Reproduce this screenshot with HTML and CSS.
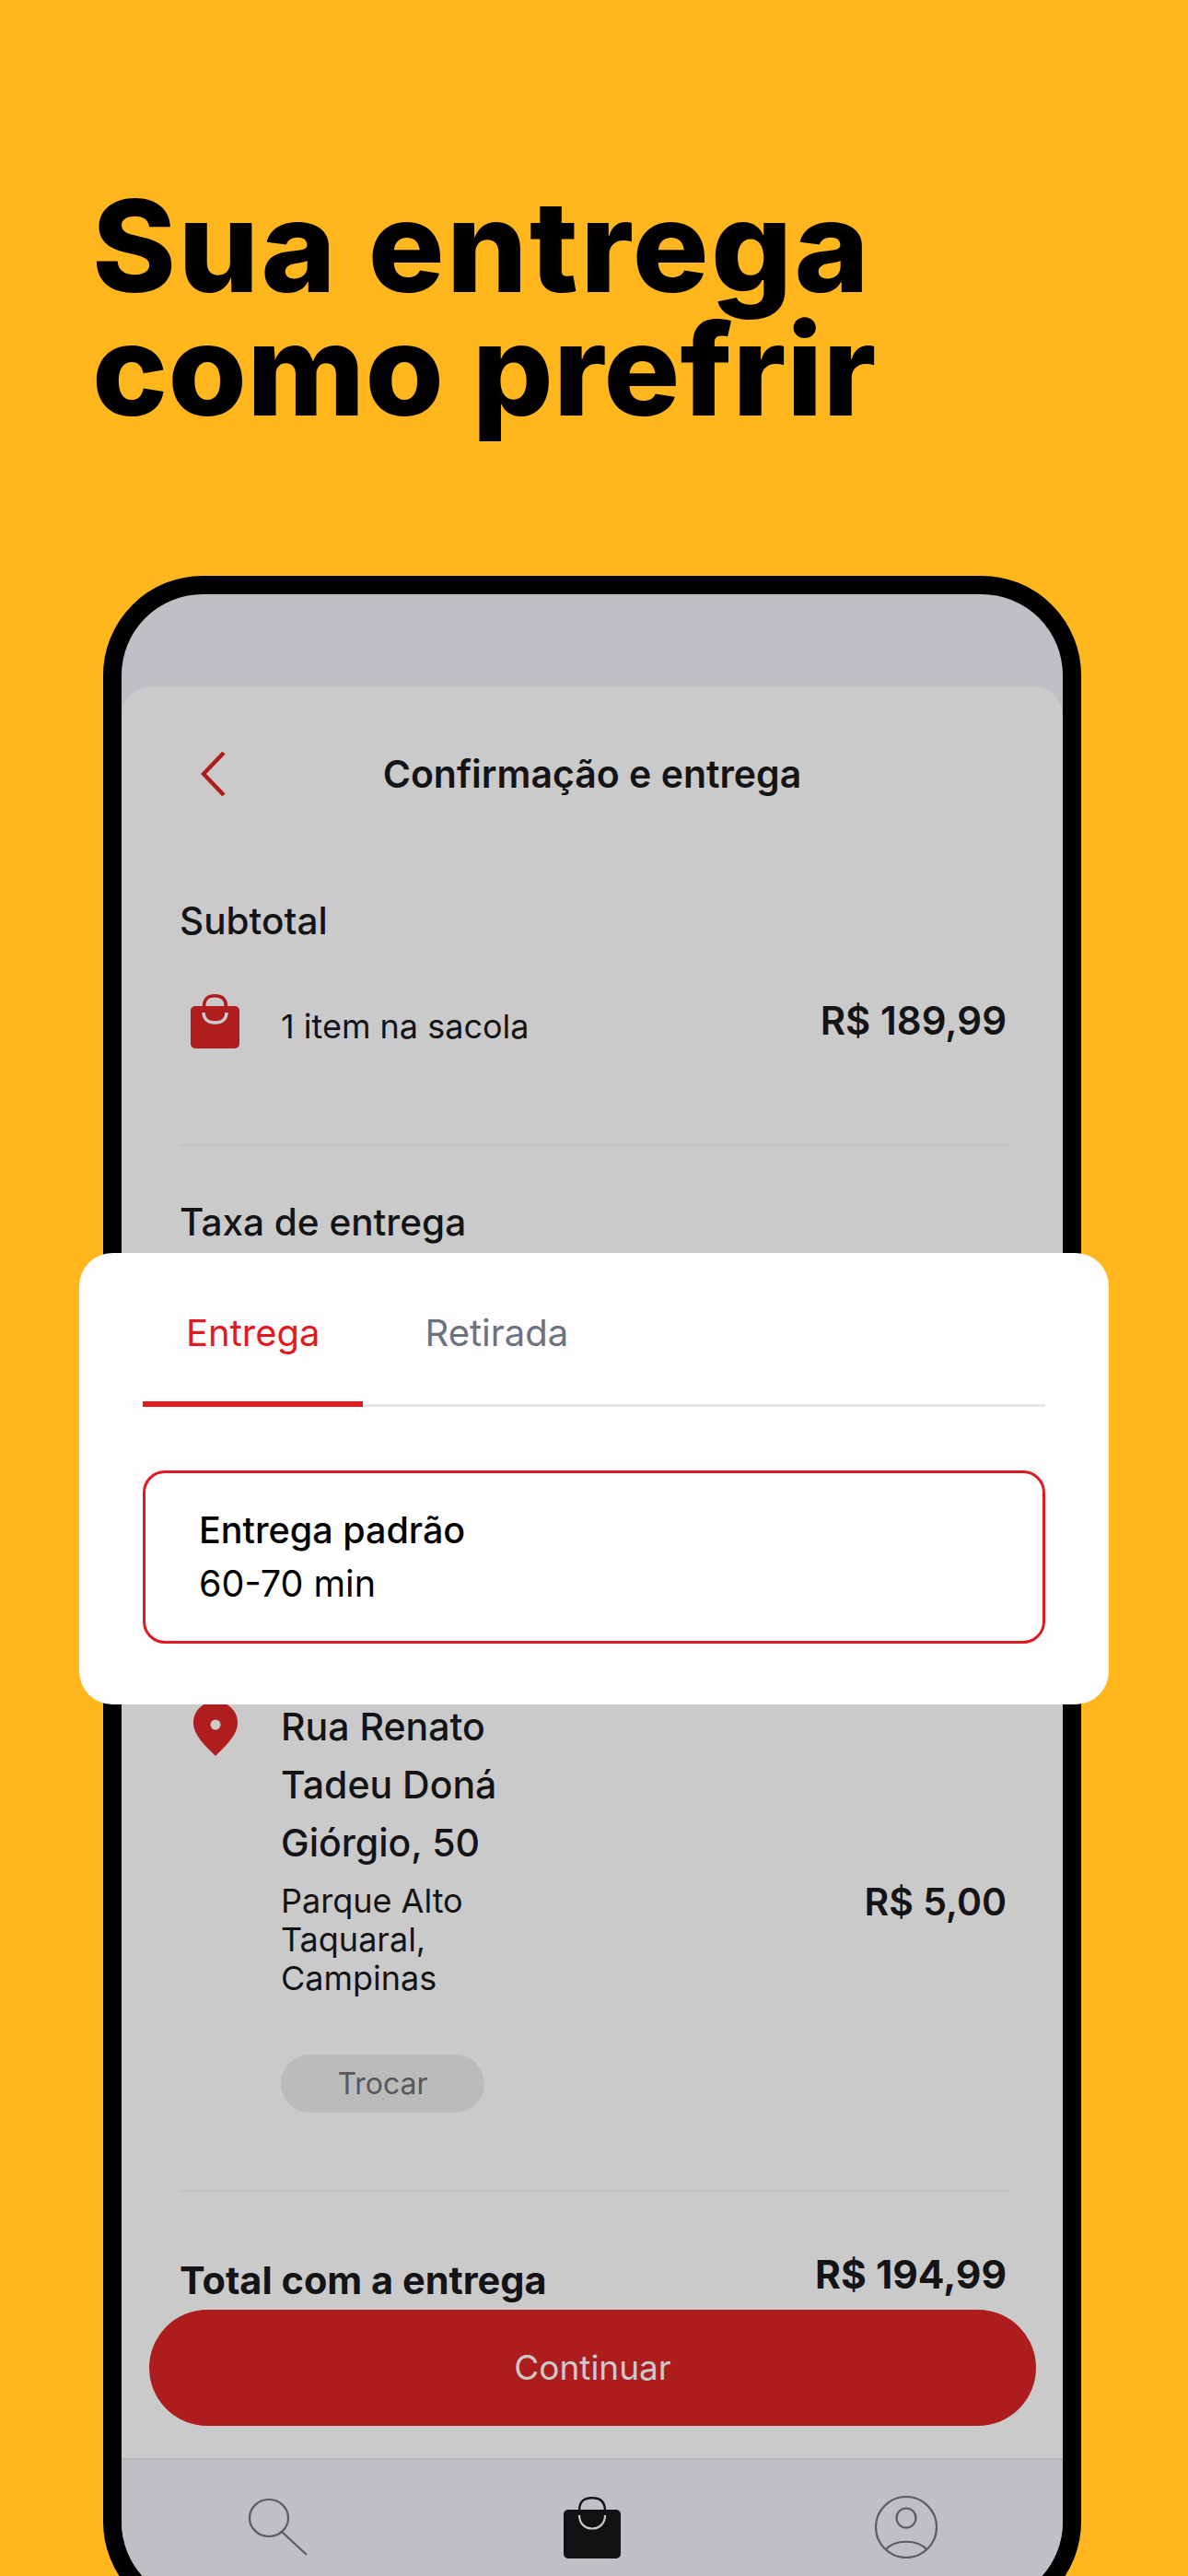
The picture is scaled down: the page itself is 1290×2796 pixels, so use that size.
FILE: index.html
```html
<!DOCTYPE html>
<html lang="pt-BR">

<head>
    <meta charset="UTF-8">
    <meta name="viewport" content="width=device-width, initial-scale=1.0">
    <title>Sua entrega como prefrir</title>
    <link rel="stylesheet" href="styles.css">
</head>

<body>
    <div class="page">
        <h1 class="headline">
            <span class="headline-top">Sua entrega</span>
            <span class="headline-bottom">como prefrir</span>
        </h1>

        <div class="phone">
            <div class="screen">
                <div class="sheet">
                    <div class="sheet-head">
                        <svg class="back-icon" width="28" height="50" viewBox="0 0 28 50">
                            <polyline points="26,2 4,25 26,48" fill="none" stroke="#b01d1f" stroke-width="4.4" />
                        </svg>
                        <div class="sheet-title">Confirmação e entrega</div>
                    </div>

                    <div class="section-title subtotal-title">Subtotal</div>
                    <div class="item-row">
                        <svg class="bag-icon" width="53" height="59" viewBox="0 0 53 59">
                            <path d="M14.5 14 C14.5 5 19 1.8 26.5 1.8 C34 1.8 38.5 5 38.5 14" fill="none" stroke="#b01d1f" stroke-width="3.6" />
                            <rect x="0" y="13" width="53" height="46" rx="5" fill="#b01d1f" />
                            <path d="M14 20 C14 27 19 31 26.5 31 C34 31 39 27 39 20" fill="none" stroke="#cbcacb" stroke-width="3.4" />
                        </svg>
                        <div class="item-label">1 item na sacola</div>
                        <div class="price item-price">R$ 189,99</div>
                    </div>

                    <div class="divider first-divider"></div>

                    <div class="section-title fee-title">Taxa de entrega</div>

                    <div class="address-row">
                        <svg class="pin-icon" width="48" height="59" viewBox="0 0 48 59">
                            <path d="M24 0 C38 0 48 10 48 23 C48 36 36 47 24 59 C12 47 0 36 0 23 C0 10 10 0 24 0 Z" fill="#b01d1f" />
                            <circle cx="24" cy="25" r="5.5" fill="#cbcacb" />
                        </svg>
                        <div class="address">
                            <div class="street">Rua Renato Tadeu Doná Giórgio, 50</div>
                            <div class="district">Parque Alto Taquaral, Campinas</div>
                            <div class="swap-button">Trocar</div>
                        </div>
                        <div class="price fee-price">R$ 5,00</div>
                    </div>

                    <div class="divider second-divider"></div>

                    <div class="total-row">
                        <div class="total-label">Total com a entrega</div>
                        <div class="price total-price">R$ 194,99</div>
                    </div>

                    <div class="continue-button">Continuar</div>
                </div>

                <div class="tabbar">
                    <div class="tabbar-item">
                        <svg class="search-icon" width="64" height="62" viewBox="0 0 64 62">
                            <ellipse cx="22" cy="21" rx="21" ry="20" fill="none" stroke="#5c5c62" stroke-width="2.2" />
                            <line x1="36" y1="36" x2="63" y2="61" stroke="#5c5c62" stroke-width="2.2" />
                        </svg>
                    </div>
                    <div class="tabbar-item">
                        <svg width="62" height="67" viewBox="0 0 62 67">
                            <path d="M17 15 C17 5 22 1.2 31 1.2 C40 1.2 45 5 45 15" fill="none" stroke="#121214" stroke-width="2.4" />
                            <rect x="0" y="14" width="62" height="53" rx="5" fill="#121214" />
                            <path d="M17 20 C17 29 23 34.5 31 34.5 C39 34.5 45 29 45 20" fill="none" stroke="#cbcacb" stroke-width="2.2" />
                        </svg>
                    </div>
                    <div class="tabbar-item">
                        <svg class="user-icon" width="68" height="68" viewBox="0 0 68 68">
                            <circle cx="34" cy="34" r="33" fill="none" stroke="#5c5c62" stroke-width="2.2" />
                            <circle cx="34" cy="24" r="10.5" fill="none" stroke="#5c5c62" stroke-width="2.2" />
                            <path d="M12 58 C22 47 46 47 56 58" fill="none" stroke="#5c5c62" stroke-width="2.2" />
                        </svg>
                    </div>
                </div>
            </div>
        </div>

        <div class="delivery-card">
            <div class="tabs">
                <div class="tab tab-active">Entrega</div>
                <div class="tab">Retirada</div>
            </div>
            <div class="option">
                <div class="option-name">Entrega padrão</div>
                <div class="option-time">60-70 min</div>
            </div>
        </div>
    </div>
</body>

</html>
```

FILE: styles.css
```css
* {
    box-sizing: border-box;
}

body {
    margin: 0;
    font-family: Inter, "Liberation Sans", sans-serif;
    color: #141416;
}

.page {
    position: relative;
    height: 2796px;
    overflow: hidden;
    padding-top: 200px;
    background-color: #ffb71d;
}

.headline {
    margin: 0 0 157px;
    padding-left: 100px;
    font-size: 138px;
    line-height: 134px;
    font-weight: 800;
    color: #000;
}

.headline-top,
.headline-bottom {
    display: block;
}

.headline-top {
    letter-spacing: 2.4px;
}

.headline-bottom {
    letter-spacing: 0.3px;
}

.phone {
    width: 1062px;
    height: 2220px;
    margin-left: 112px;
    border: 20px solid #000;
    border-radius: 108px;
    overflow: hidden;
    background-color: #c1bfc5;
}

.screen {
    display: flex;
    flex-direction: column;
    height: 100%;
    padding-top: 100px;
}

.sheet {
    height: 1923px;
    padding: 70px 61px 0 63px;
    background-color: #cbcacb;
    border-radius: 32px 32px 0 0;
}

.sheet-head {
    display: grid;
    grid-template-columns: 1fr auto 1fr;
    align-items: center;
    margin-left: -63px;
    margin-right: -61px;
    padding: 0 85px;
}

.sheet-title {
    font-size: 41px;
    line-height: 50px;
    font-weight: 600;
}

.section-title {
    font-size: 40.5px;
    line-height: 50px;
    font-weight: 450;
}

.subtotal-title {
    margin-top: 110px;
}

.item-row {
    display: flex;
    align-items: flex-start;
    margin-top: 54px;
    padding-left: 12px;
}

.item-label {
    flex: 1;
    margin-left: 45px;
    margin-top: 13px;
    font-size: 36px;
    line-height: 44px;
}

.price {
    font-size: 42px;
    line-height: 50px;
    font-weight: 600;
}

.item-price {
    margin-top: 4px;
}

.divider {
    height: 2px;
    margin-right: -2px;
    background-color: #c3c2c3;
}

.first-divider {
    margin-top: 104px;
}

.fee-title {
    margin-top: 58px;
}

.address-row {
    display: flex;
    align-items: flex-start;
    margin-top: 491px;
    padding-left: 15px;
}

.pin-icon {
    margin-top: 4px;
}

.address {
    flex: 1;
    margin-left: 47px;
}

.street {
    width: 270px;
    font-size: 41px;
    line-height: 63px;
    font-weight: 450;
}

.district {
    width: 240px;
    margin-top: 10px;
    font-size: 36px;
    line-height: 42px;
}

.swap-button {
    width: 221px;
    height: 63px;
    margin-top: 62px;
    border-radius: 32px;
    background-color: #bbbbbb;
    color: #58585a;
    font-size: 32px;
    line-height: 63px;
    text-align: center;
}

.fee-price {
    margin-top: 196px;
    font-size: 41px;
}

.second-divider {
    margin-top: 84px;
}

.total-row {
    display: flex;
    justify-content: space-between;
    align-items: flex-start;
    margin-top: 68px;
}

.total-label {
    margin-top: 2px;
    font-size: 41.5px;
    line-height: 52px;
    font-weight: 700;
}

.total-price {
    margin-top: -3px;
    font-size: 42.5px;
    font-weight: 700;
}

.continue-button {
    height: 126px;
    margin: 6px -32px 0 -33px;
    border-radius: 63px;
    background-color: #ae1d1e;
    color: #cbcacb;
    font-size: 37px;
    line-height: 126px;
    text-align: center;
}

.tabbar {
    display: grid;
    grid-template-columns: repeat(3, 1fr);
    flex: 1;
    padding-top: 40px;
    border-top: 2px solid #b5b4b8;
    background-color: #c1bfc5;
}

.tabbar-item {
    display: flex;
    justify-content: center;
    align-items: flex-start;
}

.search-icon {
    margin-top: 2px;
}

.user-icon {
    margin-top: -1px;
}

/* sits on top of the phone */
.delivery-card {
    position: absolute;
    left: 86px;
    top: 1360px;
    width: 1118px;
    height: 490px;
    padding: 62px 69px 0;
    border-radius: 36px;
    background-color: #fffcfe;
}

.tabs {
    display: flex;
    border-bottom: 3px solid #e6e6ea;
}

.tab {
    margin-bottom: -3px;
    margin-right: 20px;
    padding: 0 47px 49px;
    border-bottom: 6px solid transparent;
    font-size: 40px;
    line-height: 50px;
    color: #6b7280;
}

.tab-active {
    color: #e01b1f;
    border-bottom-color: #e01b1f;
}

.option {
    height: 188px;
    margin-top: 69px;
    padding: 38px 58px 0;
    border: 3px solid #dc1c22;
    border-radius: 24px;
    background-color: #fff;
    color: #000;
}

.option-name {
    font-size: 39.5px;
    line-height: 48px;
    font-weight: 500;
}

.option-time {
    margin-top: 10px;
    font-size: 39.5px;
    line-height: 48px;
}
```
